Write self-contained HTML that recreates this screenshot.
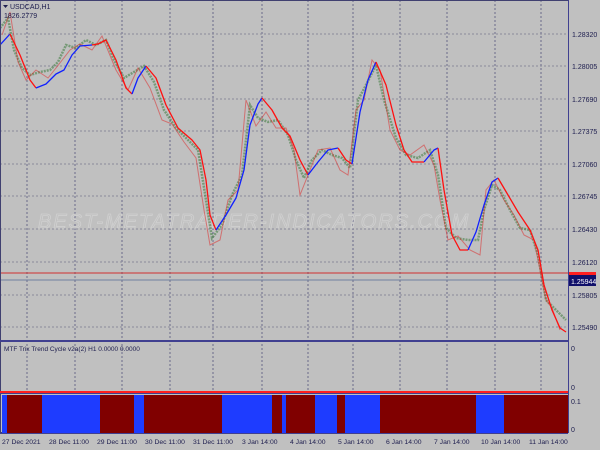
<!DOCTYPE html><html><head><style>
body{margin:0;width:600px;height:450px;background:#c0c0c0;overflow:hidden;font-family:"Liberation Sans",sans-serif;}
svg{position:absolute;left:0;top:0}
</style></head><body>
<svg width="600" height="450" xmlns="http://www.w3.org/2000/svg" font-family="Liberation Sans, sans-serif" font-size="7">
<rect width="600" height="450" fill="#c0c0c0"/>
<g stroke="#6a6a8a" stroke-width="1" stroke-dasharray="2,2">
<path d="M27 0V433M75 0V433M122 0V433M170 0V433M213 0V433M262 0V433M308 0V433M353 0V433M400 0V433M447 0V433M495 0V433M541 0V433"/>
</g>
<g stroke="#8a8a9a" stroke-width="1" stroke-dasharray="2,2">
<path d="M0 34H568M0 66H568M0 99H568M0 131H568M0 164H568M0 196H568M0 229H568M0 262H568M0 295H568M0 327H568"/>
</g>
<text x="38" y="228" font-size="20" fill="none" stroke="#d0d0d0" stroke-width="0.8" font-style="italic" letter-spacing="2">BEST-METATRADER-INDICATORS.COM</text>
<line x1="0" y1="273" x2="568" y2="273" stroke="#d03030"/>
<line x1="0" y1="280" x2="568" y2="280" stroke="#7080a0"/>
<polyline fill="none" stroke="#3a7a3a" stroke-width="2.5" stroke-opacity=".55" stroke-dasharray="2,1" points="0,28 8,18 14,50 22,68 30,75 40,72 50,70 58,62 66,45 76,48 86,40 96,45 106,40 114,60 124,78 134,72 144,66 154,82 164,110 176,128 188,140 198,150 206,200 212,238 222,225 232,195 242,175 250,105 258,118 268,122 278,120 288,135 296,160 304,178 312,160 322,150 332,155 342,158 350,168 358,100 366,85 376,65 384,100 396,138 406,155 418,158 430,150 438,175 446,228 456,238 468,240 478,240 484,210 492,185 500,190 510,210 520,228 530,230 538,255 546,300 556,310 566,320"/>
<polyline fill="none" stroke="#e02020" stroke-width="1" stroke-opacity=".5" points="2,35 10,12 18,62 26,80 36,70 48,78 56,68 70,50 80,44 92,50 102,36 116,70 128,90 138,68 150,88 162,120 172,124 184,142 196,158 204,210 210,245 220,240 228,200 238,190 246,100 256,126 266,112 276,128 286,128 294,150 300,195 310,170 318,150 330,148 340,170 348,175 356,110 364,100 372,60 380,70 390,130 400,150 410,155 424,145 434,165 440,200 448,240 458,236 470,250 480,255 486,190 494,180 504,200 514,215 524,235 534,240 540,270 546,300 552,308 560,330"/>
<g fill="none" stroke-width="1.3" stroke-linejoin="round">
<polyline stroke="#1020ff" points="0,45 10,34"/>
<polyline stroke="#ff1010" points="10,34 20,55 30,80 36,88"/>
<polyline stroke="#1020ff" points="36,88 46,84 56,74 64,70 72,55 80,46 92,45"/>
<polyline stroke="#ff1010" points="92,45 98,44 106,40 116,60 126,88 132,94"/>
<polyline stroke="#1020ff" points="132,94 138,78 146,66"/>
<polyline stroke="#ff1010" points="146,66 156,78 166,105 178,128 192,140 200,150 206,180 210,215 216,230"/>
<polyline stroke="#1020ff" points="216,230 226,215 236,198 244,170 250,125 258,104 262,98"/>
<polyline stroke="#ff1010" points="262,98 272,110 282,128 290,136 300,160 308,175"/>
<polyline stroke="#1020ff" points="308,175 318,162 328,150 338,148"/>
<polyline stroke="#ff1010" points="338,148 346,160 352,164"/>
<polyline stroke="#1020ff" points="352,164 360,112 368,80 376,62"/>
<polyline stroke="#ff1010" points="376,62 386,85 396,125 404,150 412,162 424,162"/>
<polyline stroke="#1020ff" points="424,162 434,150 438,148"/>
<polyline stroke="#ff1010" points="438,148 444,190 452,235 460,250 468,250"/>
<polyline stroke="#1020ff" points="468,250 476,232 484,205 492,182 498,178"/>
<polyline stroke="#ff1010" points="498,178 508,195 518,212 530,230 538,250 544,285 552,310 560,328 566,332"/>
</g>
<rect x="0.5" y="0.5" width="568" height="432" fill="none" stroke="#404070"/>
<rect x="0" y="340" width="568" height="2" fill="#404090"/>
<rect x="0" y="391" width="568" height="2" fill="#ff2020"/>
<rect x="0" y="393" width="568" height="1" fill="#404090"/>
<line x1="568.5" y1="0" x2="568.5" y2="433" stroke="#404090"/>
<g>
<rect x="2" y="395" width="5" height="38" fill="#1e3cff"/>
<rect x="7" y="395" width="35" height="38" fill="#800000"/>
<rect x="42" y="395" width="58" height="38" fill="#1e3cff"/>
<rect x="100" y="395" width="34" height="38" fill="#800000"/>
<rect x="134" y="395" width="10" height="38" fill="#1e3cff"/>
<rect x="144" y="395" width="78" height="38" fill="#800000"/>
<rect x="222" y="395" width="50" height="38" fill="#1e3cff"/>
<rect x="272" y="395" width="10" height="38" fill="#800000"/>
<rect x="282" y="395" width="4" height="38" fill="#1e3cff"/>
<rect x="286" y="395" width="29" height="38" fill="#800000"/>
<rect x="315" y="395" width="22" height="38" fill="#1e3cff"/>
<rect x="337" y="395" width="8" height="38" fill="#800000"/>
<rect x="345" y="395" width="35" height="38" fill="#1e3cff"/>
<rect x="380" y="395" width="96" height="38" fill="#800000"/>
<rect x="476" y="395" width="28" height="38" fill="#1e3cff"/>
<rect x="504" y="395" width="64" height="38" fill="#800000"/>
</g>
<line x1="0" y1="433.5" x2="568" y2="433.5" stroke="#404090"/>
<g fill="#202050">
<text x="10" y="9">USDCAD,H1</text>
<path d="M3 5h5l-2.5 3z"/>
<text x="4" y="18">1826.2779</text>
<text x="4" y="351" font-size="6.5">MTF Trix Trend Cycle v2a(2) H1 0.0000 0.0000</text>
</g>
<g fill="#202050" font-size="7">
<text x="572" y="37">1.28320</text><text x="572" y="69">1.28005</text><text x="572" y="102">1.27690</text>
<text x="572" y="134">1.27375</text><text x="572" y="167">1.27060</text><text x="572" y="199">1.26745</text>
<text x="572" y="232">1.26430</text><text x="572" y="265">1.26120</text><text x="572" y="298">1.25805</text>
<text x="572" y="330">1.25490</text>
<text x="571" y="351">0</text><text x="571" y="390">0</text><text x="571" y="404">0.1</text><text x="571" y="432">0</text>
</g>
<rect x="569" y="272" width="27" height="3" fill="#ff2020"/>
<rect x="569" y="275" width="27" height="11" fill="#10106a"/>
<text x="571" y="284" fill="#fff" font-size="7">1.25944</text>
<g fill="#202050" font-size="6.8">
<text x="2" y="444">27 Dec 2021</text><text x="49" y="444">28 Dec 11:00</text><text x="97" y="444">29 Dec 11:00</text>
<text x="145" y="444">30 Dec 11:00</text><text x="193" y="444">31 Dec 11:00</text><text x="242" y="444">3 Jan 14:00</text>
<text x="290" y="444">4 Jan 14:00</text><text x="338" y="444">5 Jan 14:00</text><text x="386" y="444">6 Jan 14:00</text>
<text x="434" y="444">7 Jan 14:00</text><text x="481" y="444">10 Jan 14:00</text><text x="529" y="444">11 Jan 14:00</text>
</g>
</svg>
</body></html>
